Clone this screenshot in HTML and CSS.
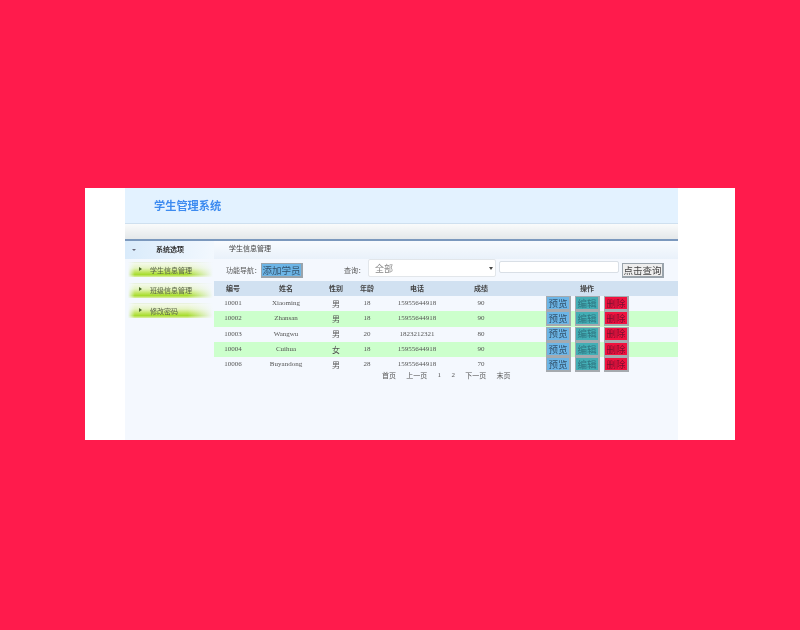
FILE: index.html
```html
<!DOCTYPE html>
<html lang="zh">
<head>
<meta charset="utf-8">
<title>学生管理系统</title>
<link rel="stylesheet" href="styles.css">
</head>
<body>
<div class="card">
  <div class="app">
    <header class="top"><h1>学生管理系统</h1></header>
    <div class="band"></div>
    <div class="main">
      <aside class="side">
        <div class="side-head"><span class="down"></span><span>系统选项</span></div>
        <a class="nav"><span class="tri"></span>学生信息管理</a>
        <a class="nav"><span class="tri"></span>班级信息管理</a>
        <a class="nav"><span class="tri"></span>修改密码</a>
      </aside>
      <section class="content">
        <div class="crumb">学生信息管理</div>
        <div class="tools">
          <span class="lbl">功能导航：</span>
          <button class="btn add">添加学员</button>
          <span class="lbl q">查询：</span>
          <div class="select"><span>全部</span><span class="caret"></span></div>
          <input class="search" type="text">
          <button class="btn go">点击查询</button>
        </div>
        <table>
          <colgroup><col class="c1"><col class="c2"><col class="c3"><col class="c4"><col class="c5"><col class="c6"><col class="c7"></colgroup>
          <thead><tr><th>编号</th><th>姓名</th><th>性别</th><th>年龄</th><th>电话</th><th>成绩</th><th class="op-h">操作</th></tr></thead>
          <tbody>
            <tr><td>10001</td><td>Xiaoming</td><td class="sex">男</td><td>18</td><td>15955644918</td><td>90</td><td class="ops"><button class="b v">预览</button><button class="b e">编辑</button><button class="b d">删除</button></td></tr>
            <tr class="g"><td>10002</td><td>Zhansan</td><td class="sex">男</td><td>18</td><td>15955644918</td><td>90</td><td class="ops"><button class="b v">预览</button><button class="b e">编辑</button><button class="b d">删除</button></td></tr>
            <tr><td>10003</td><td>Wangwu</td><td class="sex">男</td><td>20</td><td>1823212321</td><td>80</td><td class="ops"><button class="b v">预览</button><button class="b e">编辑</button><button class="b d">删除</button></td></tr>
            <tr class="g"><td>10004</td><td>Cuihua</td><td class="sex">女</td><td>18</td><td>15955644918</td><td>90</td><td class="ops"><button class="b v">预览</button><button class="b e">编辑</button><button class="b d">删除</button></td></tr>
            <tr><td>10006</td><td>Buyandong</td><td class="sex">男</td><td>28</td><td>15955644918</td><td>70</td><td class="ops"><button class="b v">预览</button><button class="b e">编辑</button><button class="b d">删除</button></td></tr>
          </tbody>
        </table>
        <div class="pager"><a>首页</a><a>上一页</a><a>1</a><a>2</a><a>下一页</a><a>末页</a></div>
      </section>
    </div>
  </div>
</div>
</body>
</html>
```
FILE: styles.css
```css
* { box-sizing: border-box; }
html, body { margin: 0; height: 630px; overflow: hidden; }
body {
  background: #ff1b4c;
  padding-top: 188px;
  font-family: "Liberation Serif", "Noto Sans CJK SC", serif;
  font-size: 7px;
  color: #555;
}
.card {
  width: 650px;
  height: 252px;
  margin-left: 85px;
  background: #fff;
  padding: 0 57px 0 40px;
}
.app {
  height: 252px;
  background: #f4f8fe;
  display: flex;
  flex-direction: column;
  filter: blur(0.3px);
}
.top {
  height: 36px;
  flex: none;
  background: #e3f2ff;
  border-bottom: 1px solid #cfe0ef;
  padding: 10px 0 0 29px;
}
.top h1 {
  margin: 0;
  font: 700 11.2px/14px "Noto Sans CJK SC", sans-serif;
  color: #3d8bf0;
}
.band {
  height: 17px;
  flex: none;
  background: linear-gradient(#fafbfb, #e4e8ea);
  border-bottom: 2px solid #7b98bd;
}
.main { flex: 1; display: flex; }
.side { width: 89px; flex: none; }
.side-head {
  height: 18px;
  display: flex;
  align-items: center;
  padding: 0 0 2px 7px;
  gap: 20px;
  background: linear-gradient(90deg, #d9ebfb, #f2f8fe);
  color: #333;
  font-weight: 700;
  margin-bottom: 3px;
}
.down {
  width: 0; height: 0;
  margin-top: 2px;
  border-left: 2px solid transparent;
  border-right: 2px solid transparent;
  border-top: 2px solid #667;
}
.nav {
  height: 15px;
  width: 85px;
  margin: 0 0 5.5px 3px;
  display: flex;
  align-items: center;
  padding: 0 0 0 11px;
  gap: 8px;
  color: #555f45;
  background:
    linear-gradient(90deg, #f4f8fe 0, rgba(244,248,254,0) 8%, rgba(244,248,254,0) 70%, #f4f8fe 100%),
    linear-gradient(180deg, #e4eed8 0, #f3f9e8 10%, #e6f4c4 40%, #c2e663 66%, #a6dc2e 84%, #dcefa8 100%);
}
.tri {
  width: 0; height: 0;
  margin-top: -2px;
  border-top: 2px solid transparent;
  border-bottom: 2px solid transparent;
  border-left: 3px solid #4e6a2c;
}
.content { flex: 1; min-width: 0; }
.crumb {
  height: 18px;
  padding: 0 0 0 15px;
  line-height: 17px;
  color: #444;
  background: linear-gradient(#f8fbfe, #e9f1fa);
}
.tools {
  height: 21px;
  display: flex;
  align-items: center;
  padding-left: 12px;
}
.lbl { color: #555; white-space: nowrap; }
.btn {
  height: 15px;
  padding: 0;
  font-family: "Noto Sans CJK SC", sans-serif;
  font-size: 9.5px;
  line-height: 12px;
  border: 1px solid #9aa4ac;
  border-width: 1px 2px 2px 1px;
}
.add { width: 42px; margin: 2px 0 0 0; background: #6cb5e6; color: #33536e; }
.q { margin-left: 41px; }
.select {
  width: 128px;
  height: 18px;
  margin: -3px 0 0 3px;
  background: #fff;
  border: 1px solid #e2e6ea;
  border-radius: 2px;
  display: flex;
  align-items: center;
  justify-content: space-between;
  padding: 0 2px 0 6px;
  font-size: 9px;
  color: #888;
}
.caret {
  width: 0; height: 0;
  border-left: 2px solid transparent;
  border-right: 2px solid transparent;
  border-top: 3px solid #444;
}
.search {
  width: 120px;
  height: 12px;
  margin: -5px 0 0 3px;
  background: #fff;
  border: 1px solid #d9dfe6;
  border-radius: 2px;
  padding: 0;
}
.go { width: 42px; margin: 2px 0 0 3px; background: #eeeeee; color: #444; }
table {
  width: 464px;
  border-collapse: collapse;
  table-layout: fixed;
  margin-top: 1px;
}
.c1 { width: 38px; } .c2 { width: 68px; } .c3 { width: 32px; } .c4 { width: 30px; }
.c5 { width: 70px; } .c6 { width: 58px; } .c7 { width: 168px; }
th {
  height: 15px;
  padding: 0 0 2px;
  background: #d1e1f1;
  color: #444;
  font-weight: 700;
}
.op-h { padding-right: 14px; }
td {
  height: 15.3px;
  padding: 0 0 1px;
  text-align: center;
  color: #555;
}
td.sex { font-size: 8px; }
.g td { background: #ccffcc; }
td.ops { font-size: 0; text-align: left; padding: 0 0 0 36px; white-space: nowrap; }
.b {
  width: 25px;
  height: 15px;
  margin: 0 4px 0 0;
  padding: 0;
  vertical-align: middle;
  font-family: "Noto Sans CJK SC", sans-serif;
  font-size: 9.5px;
  line-height: 11px;
  border: 1px solid #a5aaaf;
  border-width: 1px 2px 2px 1px;
}
.v { background: #6cb5e6; color: #33536e; }
.e { background: #43aeb5; color: #2f7480; }
.d { background: #f0123f; color: #7a1030; }
.pager {
  display: flex;
  gap: 10.3px;
  margin-top: -2px;
  padding: 0 0 0 168px;
  height: 10px;
  align-items: center;
  color: #555;
}
```
